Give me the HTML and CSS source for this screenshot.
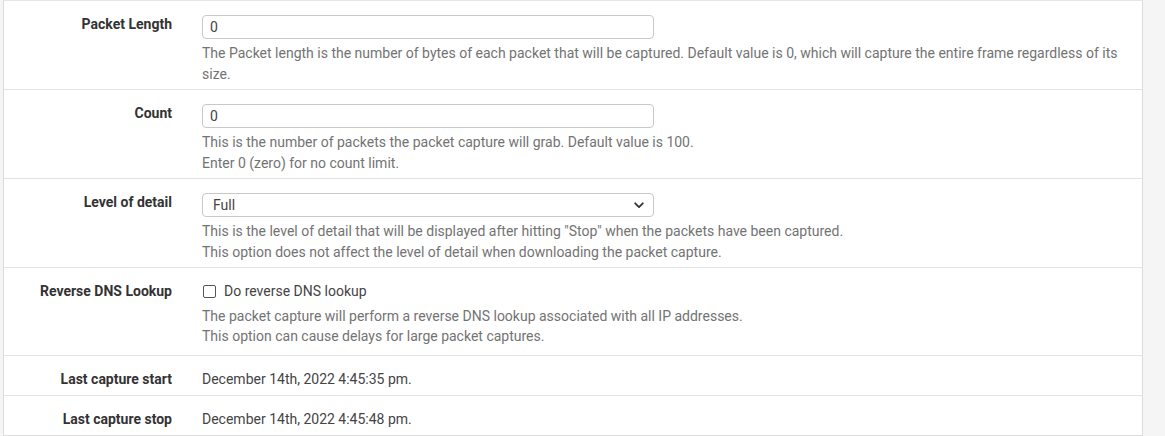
FILE: index.html
```html
<!DOCTYPE html>
<html>
<head>
<meta charset="utf-8">
<link rel="stylesheet" href="styles.css">
</head>
<body>
<div class="panel">
  <div class="row">
    <div class="label">Packet Length</div>
    <div class="control">
      <input class="field" type="text" value="0">
      <div class="help">The Packet length is the number of bytes of each packet that will be captured. Default value is 0, which will capture the entire frame regardless of its size.</div>
    </div>
  </div>
  <div class="row">
    <div class="label">Count</div>
    <div class="control">
      <input class="field" type="text" value="0">
      <div class="help">This is the number of packets the packet capture will grab. Default value is 100.<br>Enter 0 (zero) for no count limit.</div>
    </div>
  </div>
  <div class="row">
    <div class="label">Level of detail</div>
    <div class="control">
      <div class="select">
        <span>Full</span>
        <svg class="chev" width="10" height="7" viewBox="0 0 10 7"><path d="M1.2 1.3 L5 5.1 L8.8 1.3" fill="none" stroke="#333" stroke-width="1.8" stroke-linecap="round" stroke-linejoin="round"/></svg>
      </div>
      <div class="help">This is the level of detail that will be displayed after hitting "Stop" when the packets have been captured.<br>This option does not affect the level of detail when downloading the packet capture.</div>
    </div>
  </div>
  <div class="row">
    <div class="label">Reverse DNS Lookup</div>
    <div class="control">
      <label class="check"><span class="box"></span><span>Do reverse DNS lookup</span></label>
      <div class="help tight">The packet capture will perform a reverse DNS lookup associated with all IP addresses.<br>This option can cause delays for large packet captures.</div>
    </div>
  </div>
  <div class="row short">
    <div class="label">Last capture start</div>
    <div class="control"><div class="value">December 14th, 2022 4:45:35 pm.</div></div>
  </div>
  <div class="row short">
    <div class="label">Last capture stop</div>
    <div class="control"><div class="value">December 14th, 2022 4:45:48 pm.</div></div>
  </div>
</div>
</body>
</html>
```
FILE: styles.css
```css
html, body {
  margin: 0;
  padding: 0;
  background: #f5f5f5;
  font-family: Roboto, "Liberation Sans", sans-serif;
  font-size: 14px;
  color: #333;
}
.panel {
  margin-left: 3px;
  width: 1138px;
  background: #fff;
  border: 1px solid #dcdcdc;
  border-top-color: #e6e6e6;
}
.row {
  display: grid;
  grid-template-columns: 168px 1fr;
  column-gap: 30px;
  padding: 14px 12px 7px 0;
  border-top: 1px solid #e3e3e3;
  height: 89px;
  box-sizing: border-box;
}
.row:first-child { border-top: none; height: 88px; }
.row:nth-child(4) { height: 88px; }
.row.short { height: 40px; padding-top: 14px; }
.label {
  text-align: right;
  font-weight: bold;
  color: #333;
  line-height: 18px;
}
.control { min-width: 0; }
.field {
  display: block;
  box-sizing: border-box;
  width: 452px;
  height: 24px;
  margin: 0;
  padding: 0 7px;
  border: 1px solid #c8c8c8;
  border-radius: 4px;
  font-family: inherit;
  font-size: 14px;
  color: #444;
  background: #fff;
}
.select {
  box-sizing: border-box;
  width: 452px;
  height: 24px;
  border: 1px solid #c8c8c8;
  border-radius: 4px;
  display: flex;
  align-items: center;
  justify-content: space-between;
  padding: 0 9px 0 10px;
  color: #444;
}
.chev { display: block; }
.help {
  margin-top: 4px;
  color: #737373;
  line-height: 20.5px;
}
.help.tight {
  margin-top: 6px;
  line-height: 20px;
}
.check {
  display: flex;
  align-items: center;
  gap: 8px;
  height: 18px;
  color: #444;
}
.box {
  width: 11px;
  height: 11px;
  border: 1px solid #555;
  border-radius: 2px;
  margin-left: 1px;
}
.value {
  line-height: 18px;
  color: #444;
}
```
